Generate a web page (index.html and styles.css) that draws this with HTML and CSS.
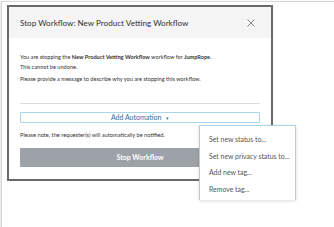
FILE: index.html
```html
<!DOCTYPE html>
<html>
<head>
<meta charset="utf-8">
<link rel="stylesheet" href="styles.css">
</head>
<body>
<div class="frame">
  <div class="modal">
    <div class="modal-header">
      <span class="title">Stop Workflow: New Product Vetting Workflow</span>
      <svg class="close" width="8" height="8" viewBox="0 0 8 8"><path d="M0.5 0.5 L7.5 7.5 M7.5 0.5 L0.5 7.5" stroke="#7a7a7a" stroke-width="0.9" fill="none"/></svg>
    </div>
    <div class="modal-body">
      <p class="line">You are stopping the <b>New Product Vetting Workflow</b> workflow for <b>JumpRope</b>.<br>This cannot be undone.</p>
      <p class="line gap">Please provide a message to describe why you are stopping this workflow.</p>
      <div class="sep"></div>
      <div class="auto-wrap">
        <div class="auto-btn">Add Automation <span class="caret">&#9662;</span></div>
        <div class="menu">
          <div class="item">Set new status to...</div>
          <div class="item">Set new privacy status to...</div>
          <div class="item">Add new tag...</div>
          <div class="item">Remove tag...</div>
        </div>
      </div>
      <p class="note">Please note, the requester(s) will automatically be notified.</p>
      <div class="stop-btn">Stop Workflow</div>
    </div>
  </div>
</div>
</body>
</html>
```
FILE: styles.css
```css
html, body { margin: 0; padding: 0; background: #fff; }
body { font-family: Lato, "Open Sans", sans-serif; color: #333; }
.frame {
  margin: 1px 0 0 1px;
  width: 329px;
  height: 222px;
  border: 1px solid #d6d6d6;
  box-shadow: 0 1px 2px rgba(0,0,0,0.25);
  padding: 3px 0 0 5px;
  box-sizing: content-box;
}
.modal {
  width: 262px;
  border: 2px solid #6a6a6a;
  background: #fff;
}
.modal-header {
  height: 31px;
  background: #f5f5f5;
  display: flex;
  align-items: center;
  justify-content: space-between;
  padding: 1px 16px 0 11px;
  box-sizing: border-box;
}
.title { font-size: 8.1px; color: #333; }
.close { display: block; }
.modal-body { padding: 14px 11px 12px 11px; }
.line { margin: 0; font-size: 5.6px; line-height: 10px; color: #333; }
.line b { font-weight: 700; }
.gap { margin-top: 2px; }
.sep { height: 1px; background: #dcdcdc; margin-top: 19px; }
.auto-wrap { position: relative; margin-top: 8px; }
.auto-btn {
  height: 9px;
  border: 1px solid #a9d7ea;
  border-radius: 1px;
  font-size: 7px;
  line-height: 9px;
  color: #2d6ea8;
  text-align: center;
}
.caret { font-size: 5px; margin-left: 3px; }
.menu {
  position: absolute;
  left: 179px;
  top: 13px;
  width: 97px;
  height: 75px;
  background: #fff;
  border-left: 1px solid #c8c8c8;
  border-right: 1px solid #c8c8c8;
  border-top: 1px solid #a9d7ea;
  box-shadow: 0 1px 3px rgba(0,0,0,0.15);
  padding-top: 5px;
  box-sizing: border-box;
  z-index: 2;
}
.item { font-size: 6.9px; line-height: 16.6px; color: #555; padding-left: 9px; white-space: nowrap; }
.note { margin: 7px 0 0 0; font-size: 5.7px; line-height: 10px; color: #333; }
.stop-btn {
  margin-top: 8px;
  height: 19px;
  background: #9da1a8;
  color: #fff;
  font-weight: 700;
  font-size: 7px;
  line-height: 19px;
  text-align: center;
  border-radius: 1px;
}
```
